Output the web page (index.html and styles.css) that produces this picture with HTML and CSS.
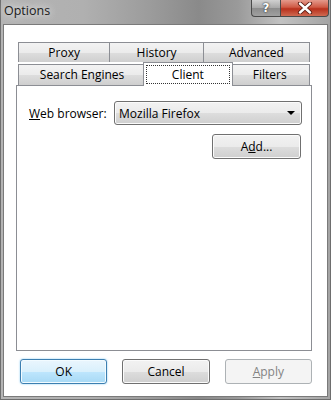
FILE: index.html
```html
<!DOCTYPE html>
<html>
<head>
<meta charset="utf-8">
<link rel="stylesheet" href="styles.css">
</head>
<body>
<div class="window">
  <div class="titlebar">
    <span class="title">Options</span>
    <div class="caption">
      <div class="cbtn help"><span class="qmark">?</span></div>
      <div class="cbtn close">
        <svg width="16" height="12" viewBox="0 0 16 12">
          <path d="M3 1.5 L13 10.5 M13 1.5 L3 10.5" stroke="#5a1a10" stroke-width="4.2" stroke-linecap="round"/>
          <path d="M3 1.5 L13 10.5 M13 1.5 L3 10.5" stroke="#ffffff" stroke-width="2.4" stroke-linecap="round"/>
        </svg>
      </div>
    </div>
  </div>
  <div class="client">
    <div class="tabs">
      <div class="tabrow row1">
        <div class="tab t-proxy">Proxy</div>
        <div class="tab t-history">History</div>
        <div class="tab t-advanced">Advanced</div>
      </div>
      <div class="tabrow row2">
        <div class="tab t-search">Search Engines</div>
        <div class="tab t-client selected"><span class="focus">Client</span></div>
        <div class="tab t-filters">Filters</div>
      </div>
    </div>
    <div class="panel">
      <div class="field">
        <span class="label"><u>W</u>eb browser:</span>
        <div class="combo">
          <span>Mozilla Firefox</span>
          <span class="arrow"></span>
        </div>
      </div>
      <div class="btn add">A<u>d</u>d...</div>
    </div>
    <div class="buttons">
      <div class="btn default">OK</div>
      <div class="btn">Cancel</div>
      <div class="btn disabled"><u>A</u>pply</div>
    </div>
  </div>
</div>
</body>
</html>
```
FILE: styles.css
```css
* { box-sizing: border-box; }
html, body { margin: 0; padding: 0; }
body {
  width: 331px;
  height: 400px;
  overflow: hidden;
  font-family: "Open Sans", "Noto Sans", sans-serif;
  font-size: 12px;
  color: #000;
}
.window {
  width: 331px;
  height: 400px;
  padding: 0 2px 2px 2px;
  display: flex;
  flex-direction: column;
  background: linear-gradient(to right, #b4b4b4 0%, #b0b0b0 25%, #9c9c9c 45%, #8a8a8a 60%, #9a9a9a 72%, #c2c2c2 85%, #a4a4a4 100%);
  border-left: 1px solid #6e6e6e;
  border-right: 1px solid #6e6e6e;
  border-bottom: 1px solid #6e6e6e;
}
.titlebar {
  height: 24px;
  flex: 0 0 24px;
  display: flex;
  justify-content: space-between;
  align-items: flex-start;
}
.title {
  margin-top: 2px;
  margin-left: 1px;
  font-size: 12.5px;
  color: #1a1a1a;
  text-shadow: 0 0 6px #e8e8e8, 0 0 10px #e0e0e0;
}
.caption {
  display: flex;
  margin-right: -1px;
}
.cbtn {
  height: 17px;
  display: flex;
  align-items: center;
  justify-content: center;
  border: 1px solid #4a4a4a;
  border-top: none;
}
.help {
  width: 29px;
  background: linear-gradient(#d0d0d0, #a8a8a8 50%, #8c8c8c 51%, #a0a0a0);
  border-radius: 0 0 0 4px;
  border-right: none;
}
.qmark {
  color: #ffffff;
  font-family: "DejaVu Sans", sans-serif;
  font-weight: bold;
  font-size: 12px;
  text-shadow: 0 0 2px #333, 0 0 1px #333;
}
.close {
  width: 49px;
  background: linear-gradient(#e49a8c, #cf5a45 45%, #b8301c 55%, #cf6a52);
  border-radius: 0 0 4px 0;
}
.client {
  flex: 1;
  background: #ffffff;
  border: 1px solid #7a7a7a;
  padding: 17px 15px 0 12px;
  display: flex;
  flex-direction: column;
}
.tabs {
  margin: 0 2px;
  display: flex;
  flex-direction: column;
}
.tabrow {
  display: flex;
  align-items: flex-end;
}
.tab {
  border: 1px solid #8c8e94;
  border-bottom: none;
  background: linear-gradient(#f3f3f3, #ebebeb 50%, #dddddd 51%, #cfcfcf);
  display: flex;
  align-items: center;
  justify-content: center;
  margin-left: -1px;
  line-height: 1;
}
.tab:first-child { margin-left: 0; }
.row1 .tab { height: 20px; }
.row2 .tab { height: 21px; }
.t-proxy { width: 93px; }
.t-history { width: 95px; }
.t-advanced { width: 108px; }
.t-search { width: 129px; }
.t-client { width: 86px; }
.t-filters { width: 81px; }
.tab.selected {
  position: relative;
  z-index: 2;
  background: #ffffff;
  height: 24px;
  width: 90px;
  margin: 0 -2px -1px -3px;
  padding: 2px 2px 2px 2px;
}
.focus {
  flex: 1;
  align-self: stretch;
  border: 1px dotted #333;
  display: flex;
  align-items: center;
  justify-content: center;
}
.panel {
  position: relative;
  z-index: 1;
  height: 266px;
  border: 1px solid #8c8e94;
  background: #ffffff;
  padding: 15px 9px 0 12px;
  display: flex;
  flex-direction: column;
  align-items: flex-end;
}
.field {
  display: flex;
  align-items: center;
  align-self: stretch;
}
.label {
  flex: 0 0 85px;
}
.combo {
  flex: 1;
  height: 24px;
  border: 1px solid #707070;
  border-radius: 3px;
  background: linear-gradient(#f2f2f2, #ebebeb 50%, #dddddd 51%, #cfcfcf);
  display: flex;
  align-items: center;
  justify-content: space-between;
  padding: 0 6px 0 4px;
  box-shadow: inset 0 0 0 1px #fbfbfb;
}
.arrow {
  width: 0;
  height: 0;
  border-left: 4px solid transparent;
  border-right: 4px solid transparent;
  border-top: 4px solid #000;
}
.btn {
  width: 89px;
  height: 25px;
  border: 1px solid #707070;
  border-radius: 3px;
  background: linear-gradient(#f2f2f2, #ebebeb 50%, #dddddd 51%, #cfcfcf);
  box-shadow: inset 0 0 0 1px #fbfbfb;
  display: flex;
  align-items: center;
  justify-content: center;
}
.add {
  margin-top: 9px;
  margin-right: 1px;
}
.buttons {
  display: flex;
  margin-top: 8px;
  margin-left: 4px;
  gap: 15px;
}
.btn.default {
  border-color: #3c7fb1;
  background: linear-gradient(#eaf6fd, #d9f0fc 50%, #bee6fd 51%, #a7d9f5);
  box-shadow: inset 0 0 0 1px #f2fbff, 0 0 2px #7cc4ef;
}
.btn.disabled {
  border-color: #adb2b5;
  background: #f4f4f4;
  box-shadow: none;
  color: #838383;
}
```
